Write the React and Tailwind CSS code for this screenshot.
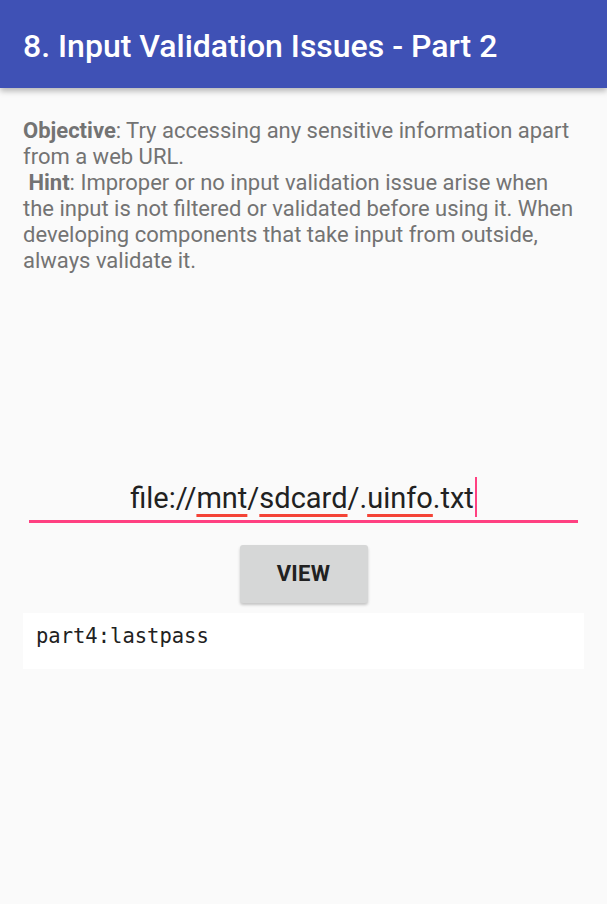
export default function App() {
  const roboto = { fontFamily: "Roboto, 'Noto Sans', sans-serif" };

  return (
    <div className="min-h-[904px] bg-[#fafafa]" style={roboto}>
      {/* Toolbar */}
      <div className="h-[88px] bg-[#3f51b5] flex items-center px-[23px] pt-[4px] shadow-[0_3px_6px_rgba(0,0,0,0.28)] relative z-10">
        <h1 className="text-white text-[32px] font-medium leading-none">
          8. Input Validation Issues - Part 2
        </h1>
      </div>

      <div className="px-[23px] pt-[30px]">
        <p className="text-[#737373] text-[22px] leading-[26px]">
          <span className="font-bold">Objective</span>: Try accessing any sensitive information apart from a web URL.
          <br />
          &nbsp;<span className="font-bold">Hint</span>: Improper or no input validation issue arise when the input is not
          filtered or validated before using it. When developing components that take input from outside, always
          validate it.
        </p>
      </div>

      {/* Input */}
      <div className="mt-[197px] mx-[29px]">
        <div className="flex justify-center items-end h-[44px]">
          <span className="text-[#212121] text-[29px] leading-[34px]">
            file://
            <span className="underline decoration-[#f44336] decoration-[3px] underline-offset-[6px]">mnt</span>/
            <span className="underline decoration-[#f44336] decoration-[3px] underline-offset-[6px]">sdcard</span>/.
            <span className="underline decoration-[#f44336] decoration-[3px] underline-offset-[6px]">uinfo</span>.txt
          </span>
          <span className="w-[2px] h-[40px] bg-[#ff4081] mb-[-2px] ml-[1px]"></span>
        </div>
        <div className="h-[2.5px] bg-[#ff4081] mt-[5px]"></div>
      </div>

      {/* Button */}
      <div className="flex justify-center mt-[22px]">
        <button className="w-[128px] h-[58px] bg-[#d6d7d7] rounded-[3px] shadow-[0_2px_3px_rgba(0,0,0,0.22)] text-[#212121] text-[22px] font-bold tracking-[0.3px]">
          VIEW
        </button>
      </div>

      {/* Output */}
      <div className="mx-[23px] mt-[10px] h-[56px] bg-white px-[13px] pt-[11px]">
        <span
          className="text-[#212121] text-[20.5px] leading-[24px]"
          style={{ fontFamily: "'DejaVu Sans Mono', monospace" }}
        >
          part4:lastpass
        </span>
      </div>
    </div>
  );
}
